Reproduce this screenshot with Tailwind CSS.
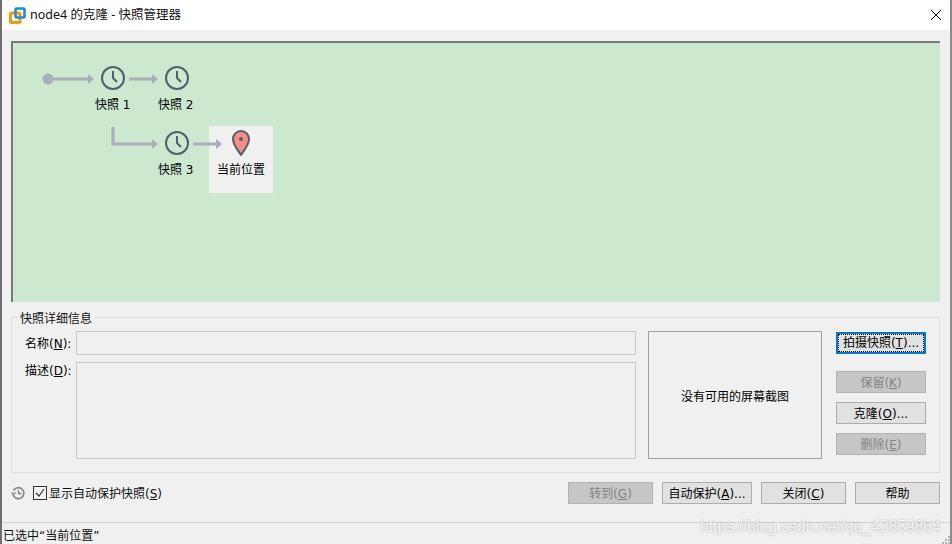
<!DOCTYPE html>
<html lang="zh">
<head>
  <meta charset="UTF-8"/>
  <title>node4 的克隆 - 快照管理器</title>
  <script src="https://cdn.jsdelivr.net/npm/@tailwindcss/browser@4"></script>
</head>
<body class="bg-[#f0f0f0] text-black">
  <div class="relative w-[952px] h-[544px] overflow-hidden bg-[#f0f0f0] border-l-2 border-r-2 border-l-[#6e6e6e] border-r-[#8a8a8a] font-['DejaVu_Sans','Noto_Sans_CJK_SC',sans-serif] text-[12px] leading-[16px]">

    <!-- Title bar -->
    <header class="h-[30px] bg-white flex items-center pl-[7px] pr-[6px] font-['Noto_Sans','Noto_Sans_CJK_SC',sans-serif]">
      <svg width="17" height="17" viewBox="0 0 17 17" fill="none">
        <rect x="1.5" y="6" width="9.5" height="9.5" rx="1" stroke="#f59a0e" stroke-width="3"/>
        <rect x="6.5" y="1.5" width="9" height="9" rx="1" stroke="#1f8fc9" stroke-width="2.6"/>
      </svg>
      <span class="ml-[4px] text-[12.5px] text-[#111]">node4 的克隆 - 快照管理器</span>
      <svg class="ml-auto mr-[2px]" width="12" height="12" viewBox="0 0 12 12" stroke="#111" fill="none"><path d="M1 1l10 10M11 1L1 11"/></svg>
    </header>

    <main class="pl-[9px] pt-[11px]">
      <!-- Snapshot tree -->
      <div class="relative w-[929px] h-[261px] bg-[#cce8cf] border-t-2 border-l-2 border-[#7a7a7a]">
        <div class="absolute left-[196px] top-[83px] w-[64px] h-[67px] bg-[#f0f0f0]"></div>
        <svg class="absolute left-[-13px] top-[-43px]" width="300" height="200" viewBox="0 0 300 200" fill="none">
          <g stroke="#a9aeb8" stroke-width="3">
            <path d="M48 79H88"/>
            <path d="M129 79H153"/>
            <path d="M113 127V144H153"/>
            <path d="M193 144H217"/>
          </g>
          <g fill="#a9aeb8">
            <circle cx="48" cy="79" r="5.5"/>
            <path d="M88 74l6 5-6 5z"/>
            <path d="M152 74l6 5-6 5z"/>
            <path d="M152 139l6 5-6 5z"/>
            <path d="M216 139l6 5-6 5z"/>
          </g>
          <g stroke="#4f5f6b" stroke-width="2">
            <circle cx="113" cy="78" r="11"/>
            <path d="M113 71v7l4 4"/>
            <circle cx="177" cy="78" r="11"/>
            <path d="M177 71v7l4 4"/>
            <circle cx="177" cy="143" r="11"/>
            <path d="M177 136v7l4 4"/>
            <path d="M241 155c-3-5-8-10-8-16a8 8 0 0 1 16 0c0 6-5 11-8 16z" fill="#f98d85" stroke-linejoin="round"/>
          </g>
          <circle cx="241" cy="139" r="2" fill="#4f5f6b"/>
        </svg>
        <span class="absolute left-[82px] top-[54px]">快照 1</span>
        <span class="absolute left-[145px] top-[54px]">快照 2</span>
        <span class="absolute left-[145px] top-[119px]">快照 3</span>
        <span class="absolute left-[204px] top-[119px]">当前位置</span>
      </div>

      <!-- Details group -->
      <section class="relative mt-[15px] w-[929px] h-[156px] border border-[#dcdcdc] pt-[13px] pl-[64px] pr-[13px] flex">
        <span class="absolute left-[6px] top-[-7px] px-[2px] bg-[#f0f0f0] text-[#111]">快照详细信息</span>
        <div class="w-[560px] flex flex-col gap-[7px]">
          <div class="relative h-[24px] border border-[#c8c8c8]">
            <span class="absolute left-[-52px] top-[4px] whitespace-nowrap">名称(<span class="underline">N</span>):</span>
          </div>
          <div class="relative h-[97px] border border-[#c8c8c8]">
            <span class="absolute left-[-52px] top-[0px] whitespace-nowrap">描述(<span class="underline">D</span>):</span>
          </div>
        </div>
        <div class="ml-[12px] w-[174px] h-[128px] pt-[3px] border border-[#a0a0a0] flex items-center justify-center">没有可用的屏幕截图</div>
        <div class="ml-[14px] w-[90px] pt-[1px] flex flex-col">
          <button class="h-[22px] bg-[#e1e1e1] border-2 border-[#0078d7] flex items-center justify-center"><span class="block border border-dotted border-black h-[18px] w-[86px] leading-[17px] whitespace-nowrap">拍摄快照(<span class="underline">T</span>)...</span></button>
          <button class="mt-[17px] h-[22px] pt-[2px] bg-[#c6c6c6] border border-[#b2b2b2] text-[#838383]">保留(<span class="underline">K</span>)</button>
          <button class="mt-[9px] h-[22px] pt-[2px] bg-[#e1e1e1] border border-[#adadad]">克隆(<span class="underline">O</span>)...</button>
          <button class="mt-[9px] h-[22px] pt-[2px] bg-[#c6c6c6] border border-[#b2b2b2] text-[#838383]">删除(<span class="underline">E</span>)</button>
        </div>
      </section>

      <!-- Bottom actions -->
      <div class="mt-[9px] h-[22px] w-[929px] flex items-center">
        <svg width="14" height="14" viewBox="0 0 14 14" fill="none" stroke="#7f858a" stroke-width="1.6">
          <path d="M2.5 4.5A5.5 5.5 0 1 1 2 8.5"/>
          <path d="M0.5 6.5l2 2 2-2" stroke-width="1.2"/>
          <path d="M7.5 4v3.5h3" stroke-width="1.3"/>
        </svg>
        <span class="ml-[8px] w-[14px] h-[14px] border border-[#333] bg-[#f4f4f4] flex items-center justify-center">
          <svg width="12" height="12" viewBox="0 0 12 12" fill="none" stroke="#333" stroke-width="1.2"><path d="M2 6l3 3 5-7"/></svg>
        </span>
        <span class="ml-[2px] pt-[1px] text-[#111]">显示自动保护快照(<span class="underline">S</span>)</span>
        <div class="ml-auto flex gap-[9px]">
          <button class="w-[85px] h-[22px] pt-[2px] bg-[#c6c6c6] border border-[#b2b2b2] text-[#838383]">转到(<span class="underline">G</span>)</button>
          <button class="w-[90px] h-[22px] pt-[2px] bg-[#e1e1e1] border border-[#adadad]">自动保护(<span class="underline">A</span>)...</button>
          <button class="w-[85px] h-[22px] pt-[2px] bg-[#e1e1e1] border border-[#adadad]">关闭(<span class="underline">C</span>)</button>
          <button class="w-[85px] h-[22px] pt-[2px] bg-[#e1e1e1] border border-[#adadad]">帮助</button>
        </div>
      </div>
    </main>

    <!-- Status bar -->
    <footer class="mt-[18px] border-t border-[#d2d2d2] h-[22px] pl-[1px] pt-[5px] text-[#111]">已选中“当前位置”</footer>

    <!-- Watermark -->
    <span class="absolute left-[698px] top-[517px] font-['Liberation_Sans',sans-serif] text-[15.7px] leading-[20px] text-white/85 [text-shadow:0_0_2px_#9a9a9a]">https://blog.csdn.net/qq_42859864</span>

    <!-- Resize grip -->
    <svg class="absolute right-0 bottom-0" width="8" height="8" viewBox="0 0 8 8" fill="#b4b4b4">
      <rect x="6" y="0" width="2" height="2"/><rect x="3" y="3" width="2" height="2"/><rect x="6" y="3" width="2" height="2"/>
      <rect x="0" y="6" width="2" height="2"/><rect x="3" y="6" width="2" height="2"/><rect x="6" y="6" width="2" height="2"/>
    </svg>
  </div>
</body>
</html>
